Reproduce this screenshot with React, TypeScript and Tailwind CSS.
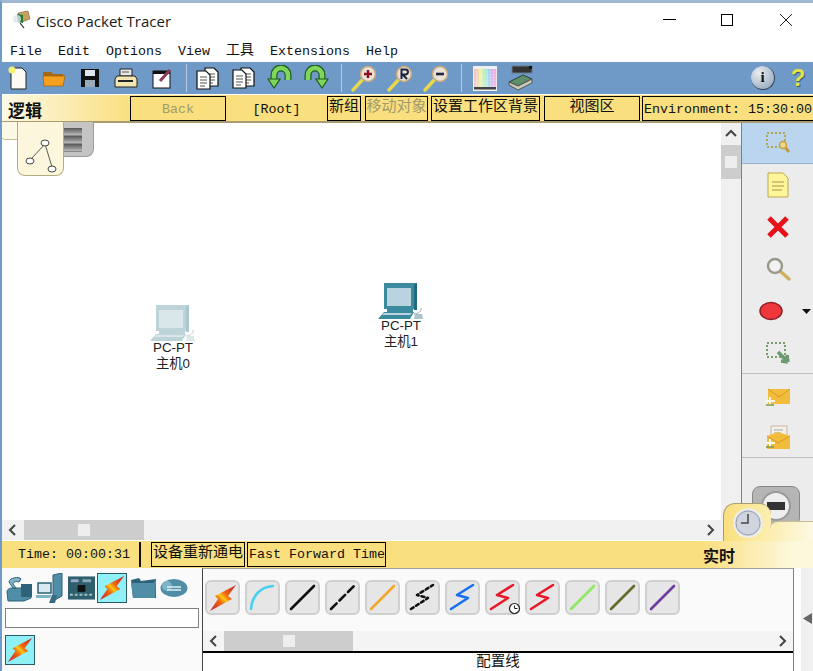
import React from "react";

const mono = { fontFamily: '"Liberation Mono","Noto Sans CJK SC",monospace' };

function S({ w = 28, h = 28, vb = "0 0 28 28", children }: { w?: number; h?: number; vb?: string; children: React.ReactNode }) {
  return <svg width={w} height={h} viewBox={vb} className="block shrink-0">{children}</svg>;
}

const Slot = ({ children }: { children: React.ReactNode }) => <div className="w-9 h-8 flex items-center justify-center shrink-0">{children}</div>;
const Sep = ({ ml, mr }: { ml: string; mr: string }) => <div className={`w-px h-7 bg-[#b8cde4] shrink-0 ${ml} ${mr}`} />;

const Doc = ({ x = 0, y = 0 }: { x?: number; y?: number }) => (
  <g transform={`translate(${x} ${y})`}>
    <path d="M0 0h9l4 4v14H0z" fill="#fff" stroke="#111" strokeWidth="1.2" />
    <path d="M3 6h7M3 9h7M3 12h7M3 15h5" stroke="#555" strokeWidth="1" />
  </g>
);

function Mag({ sign }: { sign: "+" | "R" | "-" }) {
  return (
    <S w={28} h={28}>
      <path d="M3 26L15 13" stroke="#e6d84a" strokeWidth="3.4" strokeLinecap="round" />
      <circle cx="18" cy="10" r="7.5" fill="#e8e2d8" stroke="#c9a878" strokeWidth="1.6" />
      {sign === "+" && <path d="M14 10h8M18 6v8" stroke="#8a1020" strokeWidth="2.4" />}
      {sign === "-" && <path d="M14 10h8" stroke="#1c2440" strokeWidth="2.6" />}
      {sign === "R" && <path d="M15.5 15V5.5h4a2.5 2.5 0 0 1 0 5h-3l4.500 4.500" fill="none" stroke="#1c2440" strokeWidth="2" />}
    </S>
  );
}

function Turn({ flip }: { flip?: boolean }) {
  return (
    <S w={26} h={26} vb="0 0 26 26">
      <g transform={flip ? "translate(26 0) scale(-1 1)" : undefined}>
        <path d="M21 15V10a7 7 0 0 0-14 0v6" fill="none" stroke="#1c5a20" strokeWidth="7" />
        <path d="M21 15V10a7 7 0 0 0-14 0v6" fill="none" stroke="#7fd65a" strokeWidth="4.600" />
        <path d="M1 14h12l-6 9z" fill="#7fd65a" stroke="#1c5a20" strokeWidth="1.2" />
      </g>
    </S>
  );
}

function Palette() {
  const colors = ["#f4c0c0", "#f2d8a0", "#f0f0a0", "#b8f0b0", "#a0e8e0", "#a8c8f0", "#d0b0f0", "#f0a8d8"];
  const rows = [0, 1, 2, 3, 4, 5];
  return (
    <S w={24} h={25} vb="0 0 24 25">
      <rect width="24" height="25" fill="#f0f0f0" />
      {rows.map((r) => colors.map((c, i) => <rect key={`${r}-${i}`} x={1 + i * 2.8} y={3 + r * 3} width="2.6" height="2.8" fill={c} opacity={1 - r * 0.06} />))}
      <rect x="1" y="21" width="22" height="2.500" fill="#444" />
    </S>
  );
}

function Device() {
  return (
    <S w={26} h={26} vb="0 0 26 26">
      <rect x="4" y="1" width="20" height="7" fill="#333" stroke="#6a7a8a" />
      <rect x="21" y="1" width="3" height="3" fill="#111" />
      <path d="M1 17l14-7 9 4-14 7z" fill="#5f8f6a" stroke="#2c3f30" />
      <path d="M1 17v3l9 5 14-7v-4l-14 7z" fill="#c8c8b8" stroke="#555" />
    </S>
  );
}

function Bolt({ s = 28, id }: { s?: number; id: string }) {
  return (
    <svg width={s} height={s} viewBox="0 0 28 28" className="block shrink-0">
      <defs>
        <linearGradient id={id} x1="0" y1="1" x2="1" y2="0">
          <stop offset="0" stopColor="#c8182c" />
          <stop offset="0.38" stopColor="#f06a10" />
          <stop offset="0.5" stopColor="#fcc814" />
          <stop offset="0.62" stopColor="#f06a10" />
          <stop offset="1" stopColor="#c8182c" />
        </linearGradient>
      </defs>
      <path d="M1 27L9 15 6 12 27 1 19 12 23 15z" fill={`url(#${id})`} />
    </svg>
  );
}

function Pc({ dim }: { dim?: boolean }) {
  const a = dim ? "#bcd4d8" : "#3b8a9e";
  const b = dim ? "#d9e6ea" : "#b9d4de";
  const c = dim ? "#a8c8cc" : "#1f6a80";
  return (
    <S w={46} h={40} vb="0 0 46 40">
      <path d="M6 3h30v24H6z" fill={a} />
      <path d="M36 1l3 0v27h-3z" fill={c} />
      <path d="M6 1h32l-2 2H6z" fill={a} />
      <rect x="9" y="6" width="24" height="18" fill={b} />
      <path d="M9 27h26v3H9z" fill={a} />
      <path d="M6 30h30l-4 7H0z" fill={a} />
      <path d="M6 31h28l-2 2H4z" fill={b} />
      <path d="M36 32c4 0 8-3 7-6" fill="none" stroke={dim ? "#ccc" : "#9ab"} strokeWidth="1" />
      <path d="M37 32h7l1 5h-9z" fill={dim ? "#dde8ea" : "#a9c4cc"} />
    </S>
  );
}

function Node({ cls, name, dim }: { cls: string; name: string; dim?: boolean }) {
  return (
    <div className={`absolute flex flex-col items-center w-[60px] ${cls}`}>
      <Pc dim={dim} />
      <div className="text-[13.33px] leading-[16px] text-[#222] -mt-[4px] font-['Liberation_Sans','Noto_Sans_CJK_SC',sans-serif]">PC-PT</div>
      <div className="text-[13.33px] leading-[16px] text-[#222] font-['Liberation_Sans','Noto_Sans_CJK_SC',sans-serif]">{name}</div>
    </div>
  );
}

function Chev({ dir }: { dir: "u" | "l" | "r" }) {
  const d = dir === "u" ? "M2 9l5-5 5 5" : dir === "l" ? "M9 2L4 7l5 5" : "M5 2l5 5-5 5";
  return <S w={14} h={14} vb="0 0 14 14"><path d={d} fill="none" stroke="#444" strokeWidth="2" /></S>;
}

function YBtn({ cls, children, dim }: { cls: string; children: React.ReactNode; dim?: boolean }) {
  return (
    <div className={`h-[25px] border border-black [border-width:1.5px] bg-[#f9df7e] flex items-center justify-center shrink-0 whitespace-nowrap overflow-hidden ${dim ? "text-[#a39a6c]" : "text-[#111]"} ${cls}`} style={mono}>
      {children}
    </div>
  );
}

function Marquee({ tone }: { tone: "find" | "resize" }) {
  return (
    <S w={28} h={26} vb="0 0 28 26">
      <rect x="3" y="3" width="18" height="14" fill="none" stroke={tone === "find" ? "#b0a850" : "#7a9a6a"} strokeWidth="2" strokeDasharray="2 2" />
      {tone === "find" ? (
        <>
          <path d="M20 16l5 6" stroke="#c09a40" strokeWidth="3" />
          <circle cx="19" cy="15" r="3.500" fill="#e8d890" stroke="#c9a040" strokeWidth="1.500" />
        </>
      ) : (
        <path d="M14 12l10 10M24 22l-1-7M24 22l-7-1" stroke="#6a9a70" strokeWidth="3.500" />
      )}
    </S>
  );
}

function Mail({ open }: { open?: boolean }) {
  return (
    <S w={28} h={28}>
      {open && <path d="M7 3h16v12H7z" fill="#f4f0e6" stroke="#c8b8a0" />}
      {open && <path d="M10 7h9M10 10h7" stroke="#9aa" />}
      <path d={open ? "M3 13l11-4 12 4v13H3z" : "M4 8h22v15H4z"} fill="#f2bc3c" />
      <path d={open ? "M3 13l11 7 12-7" : "M4 8l11 8 11-8"} fill="none" stroke="#d89a20" />
      <path d="M2 20h9M6 16v8" stroke="#f8f8f0" strokeWidth="2" />
      <path d="M2 24h8" stroke="#7a9a40" strokeWidth="1.500" />
    </S>
  );
}

const Tool = ({ children, cls = "" }: { children: React.ReactNode; cls?: string }) => (
  <div className={`h-[42px] flex items-center justify-center relative shrink-0 ${cls}`}>{children}</div>
);

function CableBtn({ children }: { children: React.ReactNode }) {
  return (
    <div className="w-[35px] h-[35px] rounded-md bg-[#e6e6e6] border-2 border-[#cfcfcf] flex items-center justify-center shrink-0">
      {children}
    </div>
  );
}

function Cable({ d, color, w = 2.5, dash }: { d: string; color: string; w?: number; dash?: string }) {
  return (
    <S w={31} h={31} vb="0 0 31 31">
      <path d={d} fill="none" stroke={color} strokeWidth={w} strokeDasharray={dash} strokeLinecap="round" strokeLinejoin="round" />
    </S>
  );
}

const zig = "M4 27L21 16 10 13 26 3";

function CatIcon({ kind }: { kind: number }) {
  const fill = "#4f8ea6";
  const dark = "#2d6278";
  if (kind === 0)
    return (
      <S w={28} h={28}>
        <path d="M2 18c0-3 3-4 6-4h9l9 2v8l-7 3H3z" fill={fill} stroke={dark} />
        <path d="M16 10h11v13h-11z" fill={dark} />
        <path d="M4 8c0-4 10-6 12-3l-2 3c-3-1-6 0-6 2l3 4H8z" fill="#7fb4c8" stroke={dark} />
      </S>
    );
  if (kind === 1)
    return (
      <S w={28} h={30} vb="0 0 28 30">
        <path d="M17 2l9-2v23l-9 5z" fill={fill} stroke={dark} />
        <rect x="2" y="10" width="13" height="10" fill="#d8eaf0" stroke={dark} strokeWidth="1.500" />
        <path d="M0 22h16l-2 3H0z" fill="#7fb4c8" />
        <path d="M13 30l3-8h5l-2 8z" fill="#3a6a80" />
      </S>
    );
  if (kind === 2)
    return (
      <S w={27} h={24} vb="0 0 28 24">
        <rect width="28" height="24" fill="#2f5f6c" />
        <rect x="3" y="3" width="8" height="3" fill="#9ac" />
        <rect x="15" y="3" width="9" height="3" fill="#8ab" />
        <rect x="10" y="9" width="8" height="7" fill="#111" />
        <path d="M2 19h24" stroke="#a0c0c8" strokeWidth="2" strokeDasharray="3 2" />
      </S>
    );
  if (kind === 4)
    return (
      <S w={27} h={24} vb="0 0 27 24">
        <path d="M1 4l8-2 2 3 15-2v19H3z" fill={dark} />
        <path d="M1 7h22l3-3-1 18H3z" fill={fill} />
      </S>
    );
  return (
    <S w={28} h={20} vb="0 0 28 20">
      <ellipse cx="14" cy="10" rx="13.500" ry="9" fill={fill} />
      <ellipse cx="7" cy="8" rx="5" ry="5" fill="#7fb4c8" />
      <path d="M7 9h14M7 12h14" stroke="#e0eef4" strokeWidth="1.500" />
    </S>
  );
}

export default function App() {
  return (
    <div className="relative w-[813px] h-[671px] overflow-hidden bg-white border-t-[3px] border-t-[#9db8cf] border-l-2 border-l-[#6f9ac9] flex flex-col font-['Liberation_Sans','Noto_Sans_CJK_SC',sans-serif]">
      {/* title */}
      <div className="h-[33px] flex items-center shrink-0 pl-[10px]">
        <S w={20} h={20} vb="0 0 20 20">
          <path d="M6 3l10-2 2 8-8 3z" fill="#c9a060" stroke="#6a4a20" strokeWidth="0.500" />
          <path d="M5 4l6 1v8l-5-1z" fill="#1f7a30" />
          <circle cx="5" cy="9" r="4" fill="#dde5e8" opacity="0.800" />
          <path d="M8 13l4 5" stroke="#222" strokeWidth="1.200" />
        </S>
        <span className="ml-[4px] pt-[3px] text-[15px] text-[#1a1a1a] font-['Open_Sans',sans-serif]">Cisco Packet Tracer</span>
        <div className="ml-auto flex items-center">
          <div className="w-[13px] h-px bg-black mr-[45px]" />
          <div className="w-[12px] h-[12px] border border-black mr-[46px]" />
          <svg width="14" height="14" viewBox="0 0 14 14" className="mr-[20px] block"><path d="M1 1l12 12M13 1L1 13" stroke="#222" strokeWidth="1" /></svg>
        </div>
      </div>
      {/* menu */}
      <div className="h-[26px] flex items-center gap-4 pl-2 pt-[5px] text-[13.33px] text-[#111] shrink-0" style={mono}>
        <span>File</span><span>Edit</span><span>Options</span><span>View</span>
        <span className="text-[14px] -mt-[2px]">工具</span>
        <span>Extensions</span><span>Help</span>
      </div>
      {/* toolbar */}
      <div className="h-[32px] -ml-[2px] bg-[#6f9ac8] flex items-center shrink-0">
        <Slot>
          <S w={20} h={24} vb="0 0 20 24">
            <path d="M3 2h11l4 4v17H3z" fill="#fbfbf4" stroke="#222" />
            <circle cx="4" cy="4" r="3.500" fill="#f4f070" />
          </S>
        </Slot>
        <Slot>
          <S w={24} h={18} vb="0 0 24 18">
            <path d="M1 3h8l2 2h10v3H1z" fill="#a86a10" />
            <path d="M1 7h22l-2 10H2z" fill="#f5a020" stroke="#9a6010" strokeWidth="0.700" />
          </S>
        </Slot>
        <Slot>
          <S w={20} h={20} vb="0 0 20 20">
            <rect x="1" y="1" width="18" height="18" fill="#111" />
            <rect x="5" y="2" width="10" height="6" fill="#dfe8f0" />
            <rect x="5" y="12" width="10" height="7" fill="#9ab" />
          </S>
        </Slot>
        <Slot>
          <S w={24} h={20} vb="0 0 24 20">
            <path d="M6 1h12v7H6z" fill="#e8e8e8" stroke="#222" />
            <path d="M8 4h7" stroke="#555" />
            <path d="M3 8h18l2 3v8H1v-8z" fill="#f4e6b0" stroke="#222" />
            <path d="M4 13h15" stroke="#222" strokeWidth="2" />
          </S>
        </Slot>
        <Slot>
          <S w={20} h={22} vb="0 0 20 22">
            <rect x="1" y="4" width="17" height="17" fill="#fff" stroke="#111" />
            <rect x="1" y="4" width="17" height="3" fill="#111" />
            <path d="M8 14L18 3" stroke="#8a3a5a" strokeWidth="3" />
          </S>
        </Slot>
        <Sep ml="ml-[6px]" mr="mr-[3px]" />
        <Slot>
          <S w={24} h={26} vb="0 0 24 26">
            <Doc x={9} y={3} />
            <Doc x={1} y={6} />
          </S>
        </Slot>
        <Slot>
          <S w={24} h={24} vb="0 0 24 24">
            <Doc x={9} y={2} />
            <Doc x={1} y={4} />
          </S>
        </Slot>
        <Slot><Turn /></Slot>
        <Slot><Turn flip /></Slot>
        <Sep ml="ml-[7px]" mr="mr-1" />
        <Slot><Mag sign="+" /></Slot>
        <Slot><Mag sign="R" /></Slot>
        <Slot><Mag sign="-" /></Slot>
        <Sep ml="ml-[7px]" mr="mr-[5px]" />
        <Slot><Palette /></Slot>
        <Slot><Device /></Slot>
        <div className="ml-auto mr-px flex gap-[7px] items-center">
          <div className="w-[24px] h-[24px] rounded-full bg-[radial-gradient(circle_at_35%_30%,#e8edf2,#8aa0b8)] border-r border-b border-[#345] flex items-center justify-center text-[15px] font-bold text-[#111] font-['Liberation_Serif',serif] mx-[2px]">i</div>
          <div className="w-[28px] text-center text-[24px] leading-[28px] font-bold text-[#e6e04a] [text-shadow:1px_1px_0_#3a5a70]">?</div>
        </div>
      </div>
      {/* yellow bar */}
      <div className="h-[28px] mt-px flex items-center shrink-0 border-b-2 border-[#a89c70] bg-[linear-gradient(to_right,#fdf9e6,#f9df7e_130px)] overflow-hidden">
        <div className="w-[128px] shrink-0 pl-[6px] text-[17px] font-bold text-[#111] font-['Noto_Sans_CJK_SC',sans-serif] pt-[3px]">逻辑</div>
        <YBtn cls="w-[96px] text-[13.33px] pt-[4px]" dim>Back</YBtn>
        <div className="w-[101px] shrink-0 text-center text-[13.33px] text-[#111] pt-[4px]" style={mono}>[Root]</div>
        <YBtn cls="w-[34px] text-[15px]">新组</YBtn>
        <YBtn cls="w-[63px] ml-1 text-[15px]" dim>移动对象</YBtn>
        <YBtn cls="w-[109px] ml-[3px] text-[15px]">设置工作区背景</YBtn>
        <YBtn cls="w-[96px] ml-1 text-[15px]">视图区</YBtn>
        <YBtn cls="w-[176px] ml-[2px] justify-start pl-[1px] text-[13.33px] pt-[4px]">Environment: 15:30:00</YBtn>
      </div>
      {/* main */}
      <div className="h-[418px] flex shrink-0">
        <div className="w-[719px] flex flex-col shrink-0">
          <div className="relative h-[397px] bg-white shrink-0">
            <Node cls="left-[141px] top-[181px]" name="主机0" dim />
            <Node cls="left-[369px] top-[159px]" name="主机1" />
          </div>
          <div className="h-[20px] bg-[#f0f0f0] flex items-center shrink-0">
            <div className="w-[22px] flex justify-center"><Chev dir="l" /></div>
            <div className="w-[120px] h-full bg-[#cdcdcd] flex items-center justify-center"><div className="w-[12px] h-[12px] bg-[#eeeeee]" /></div>
            <div className="ml-auto w-[22px] flex justify-center"><Chev dir="r" /></div>
          </div>
        </div>
        <div className="w-[20px] bg-[#f0f0f0] flex flex-col items-center shrink-0">
          <div className="h-[22px] flex items-center"><Chev dir="u" /></div>
          <div className="w-full h-[34px] bg-[#cdcdcd] flex items-center justify-center"><div className="w-[12px] h-[12px] bg-[#eeeeee]" /></div>
        </div>
        <div className="flex-1 border-l border-[#808080] bg-[#ececec] flex flex-col">
          <div className="h-[41px] bg-[#bcd5ee] border-b border-[#9ab0c8] flex items-center justify-center shrink-0"><Marquee tone="find" /></div>
          <Tool>
            <S w={22} h={26} vb="0 0 22 26">
              <path d="M1 1h15l5 5v19H1z" fill="#fdf59a" stroke="#bda850" />
              <path d="M5 10h12M5 14h12M5 18h10" stroke="#a89850" strokeWidth="1.200" />
            </S>
          </Tool>
          <Tool>
            <S w={24} h={24} vb="0 0 24 24"><path d="M3 3l18 18M21 3L3 21" stroke="#e8101a" strokeWidth="5" /></S>
          </Tool>
          <Tool>
            <S w={26} h={26} vb="0 0 26 26">
              <path d="M15 15l9 8" stroke="#d0b060" strokeWidth="3.500" strokeLinecap="round" />
              <circle cx="10" cy="10" r="7" fill="#f2f2f2" stroke="#9a9a8a" strokeWidth="2.500" />
            </S>
          </Tool>
          <Tool cls="pr-[14px]">
            <S w={24} h={20} vb="0 0 24 20"><ellipse cx="12" cy="10" rx="11" ry="8.500" fill="#f0383c" stroke="#8c2024" strokeWidth="1.500" /></S>
            <svg width="9" height="5" viewBox="0 0 9 5" className="absolute right-[2px] top-[19px] block"><path d="M0 0h9L4.500 5z" fill="#111" /></svg>
          </Tool>
          <Tool cls="border-b border-[#bdbdbd] h-[41px]"><Marquee tone="resize" /></Tool>
          <Tool><Mail /></Tool>
          <Tool cls="border-b border-[#bdbdbd]"><Mail open /></Tool>
        </div>
      </div>
      {/* time bar */}
      <div className="h-[27px] flex items-center shrink-0 bg-[linear-gradient(to_right,#f9df7e_700px,#fdf7dc_790px)]">
        <div className="w-[137px] shrink-0 pl-[16px] text-[13.33px] text-[#111]" style={mono}>Time: 00:00:31</div>
        <div className="w-[2px] h-[25px] bg-[#111] shrink-0" />
        <YBtn cls="w-[94px] ml-[10px] text-[15px]">设备重新通电</YBtn>
        <YBtn cls="w-[139px] ml-[2px] justify-start pl-px text-[13.33px] pt-[1px]">Fast Forward Time</YBtn>
        <div className="ml-[317px] text-[16px] font-bold text-[#111] font-['Noto_Sans_CJK_SC',sans-serif] relative z-20">实时</div>
      </div>
      {/* bottom */}
      <div className="flex-1 flex min-h-0">
        <div className="w-[200px] shrink-0 bg-[#fafafa] flex flex-col">
          <div className="h-[40px] flex items-center pl-[3px] gap-[3px] shrink-0">
            <CatIcon kind={0} />
            <CatIcon kind={1} />
            <div className="ml-[1px]"><CatIcon kind={2} /></div>
            <div className="-ml-[1px] w-[30px] h-[30px] bg-[#90f0f8] border border-[#2a5a66] flex items-center justify-center shrink-0"><Bolt s={26} id="bolt-a" /></div>
            <CatIcon kind={4} />
            <CatIcon kind={5} />
          </div>
          <div className="ml-[3px] w-[194px] h-[20px] border border-[#808080] bg-white shrink-0" />
          <div className="ml-[3px] mt-[7px] w-[30px] h-[30px] bg-[#90f0f8] border border-[#2a5a66] flex items-center justify-center shrink-0"><Bolt s={26} id="bolt-b" /></div>
        </div>
        <div className="w-[592px] shrink-0 border-l border-l-[#444] border-t border-t-[#a0a0a0] border-r border-r-[#808080] flex flex-col bg-[#fafafa]">
          <div className="h-[62px] shrink-0 flex items-start pt-[11px] pl-[2px] gap-[5px]">
            <CableBtn><Bolt s={28} id="bolt-c" /></CableBtn>
            <CableBtn><Cable d="M4 27C5 14 13 5 26 4" color="#48d0f0" w={2.6} /></CableBtn>
            <CableBtn><Cable d="M4 27L27 4" color="#111" w={2.6} /></CableBtn>
            <CableBtn><Cable d="M4 27L27 4" color="#111" w={2.6} dash="8 4" /></CableBtn>
            <CableBtn><Cable d="M4 27L27 4" color="#f0a830" w={2.6} /></CableBtn>
            <CableBtn><Cable d={zig} color="#111" w={2.6} dash="3 3" /></CableBtn>
            <CableBtn><Cable d={zig} color="#1870f0" w={2.6} /></CableBtn>
            <CableBtn>
              <div className="relative">
                <Cable d={zig} color="#e81828" w={2.6} />
                <svg width="13" height="13" viewBox="0 0 13 13" className="absolute right-[-3px] bottom-[-2px] block"><circle cx="6.500" cy="6.500" r="5" fill="#fff" stroke="#222" strokeWidth="1.200" /><path d="M6.500 3.500v3h3" fill="none" stroke="#222" /></svg>
              </div>
            </CableBtn>
            <CableBtn><Cable d={zig} color="#e81828" w={2.6} /></CableBtn>
            <CableBtn><Cable d="M4 27L27 4" color="#90e860" w={2.6} /></CableBtn>
            <CableBtn><Cable d="M4 27L27 4" color="#666a28" w={2.6} /></CableBtn>
            <CableBtn><Cable d="M4 27L27 4" color="#6a3ca0" w={2.6} /></CableBtn>
          </div>
          <div className="h-[20px] bg-[#f4f4f4] flex items-center shrink-0">
            <div className="w-[21px] flex justify-center"><Chev dir="l" /></div>
            <div className="w-[129px] h-full bg-[#cdcdcd] flex items-center justify-center"><div className="w-[12px] h-[12px] bg-[#eeeeee]" /></div>
            <div className="ml-auto w-[22px] flex justify-center"><Chev dir="r" /></div>
          </div>
          <div className="flex-1 border-t-2 border-black bg-white text-center text-[14.5px] leading-[18px] text-[#111]" style={mono}>配置线</div>
        </div>
        <div className="w-[7px] shrink-0 bg-white" />
        <div className="flex-1 bg-[#f0f0f0] flex items-start justify-center pt-[45px]">
          <svg width="9" height="11" viewBox="0 0 9 11" className="block"><path d="M9 0v11L0 5.500z" fill="#666" /></svg>
        </div>
      </div>

      {/* logical tab, lying over the canvas */}
      <div className="absolute left-[45px] top-[119px] w-[47px] h-[35px] bg-[#c4c4c4] rounded-b-lg border border-t-0 border-[#9a9a9a] flex items-start justify-center pt-[6px] pl-[2px]">
        <div className="w-[20px] h-[24px] bg-[repeating-linear-gradient(to_bottom,#555_0,#bbb_7px,#555_8px)]" />
      </div>
      <div className="absolute -left-[2px] top-[119px] w-[18px] h-[18px] bg-[#fdf9e6] rounded-bl-md border-b border-[#c8bc90]" />
      <div className="absolute left-[15px] top-[119px] w-[47px] h-[54px] bg-[#fbf6dc] border border-t-0 border-[#b5ab80] rounded-b-lg flex items-end justify-center pb-[2px]">
        <svg width="34" height="36" viewBox="0 0 34 36" className="block">
          <path d="M21 7L7 22M21 7L28 30" stroke="#333" strokeWidth="0.800" />
          <ellipse cx="21" cy="6" rx="4" ry="3" fill="#fff" stroke="#444" />
          <ellipse cx="6" cy="24" rx="4" ry="3" fill="#fff" stroke="#444" />
          <ellipse cx="28" cy="32" rx="4" ry="3" fill="#fff" stroke="#444" />
        </svg>
      </div>

      {/* realtime tab */}
      <div className="absolute left-[750px] top-[483px] w-[48px] h-[40px] rounded-lg bg-[#b5b5b5] border border-[#888] flex items-start justify-center pt-[4px]">
        <div className="w-[30px] h-[30px] rounded-full bg-[#eee] border-2 border-[#999] flex items-center justify-center"><div className="w-[18px] h-[8px] bg-[#333]" /></div>
      </div>
      <div className="absolute left-[721px] top-[500px] w-[48px] h-[38px] rounded-t-xl bg-[linear-gradient(to_right,#f9df7e,#fbeeb0)] border-t border-l border-[#a89c70] flex items-start justify-center pt-[4px]">
        <svg width="30" height="30" viewBox="0 0 30 30" className="block">
          <circle cx="15" cy="15" r="14" fill="#d6dbe4" stroke="#eef0f4" strokeWidth="1.500" />
          <circle cx="15" cy="15" r="12" fill="#cfd4de" stroke="#9aa0ac" />
          <path d="M15 6v9H8" fill="none" stroke="#444" strokeWidth="1.500" />
        </svg>
      </div>
      <div className="absolute left-[768px] top-[518px] w-[45px] h-[20px] rounded-tl-lg bg-[linear-gradient(to_right,#fbeeb0,#fdf9e6)] border-t border-[#c8bc90]" />
    </div>
  );
}
